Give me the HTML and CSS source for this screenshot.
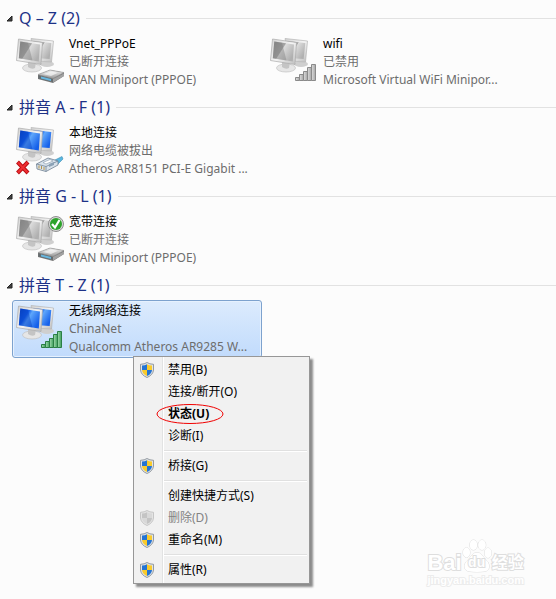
FILE: index.html
```html
<!DOCTYPE html>
<html lang="zh-CN">
<head>
<meta charset="utf-8">
<title>网络连接</title>
<link rel="stylesheet" href="styles.css">
</head>
<body>
<svg class="defs" width="0" height="0" aria-hidden="true">
  <defs>
    <linearGradient id="blue" x1="0" y1="0" x2="1" y2="0.6">
      <stop offset="0" stop-color="#0b45c4"/><stop offset="0.4" stop-color="#1560ea"/>
      <stop offset="0.55" stop-color="#5ea6fb"/><stop offset="1" stop-color="#1560ea"/>
    </linearGradient>
    <linearGradient id="grey" x1="0" y1="0" x2="1" y2="0.6">
      <stop offset="0" stop-color="#8a8a8a"/><stop offset="0.48" stop-color="#a4a4a4"/>
      <stop offset="0.52" stop-color="#dcdcdc"/><stop offset="1" stop-color="#b0b0b0"/>
    </linearGradient>
    <linearGradient id="frame" x1="0" y1="0" x2="1" y2="1">
      <stop offset="0" stop-color="#d2d2d2"/><stop offset="0.5" stop-color="#f4f4f4"/><stop offset="1" stop-color="#bcbcbc"/>
    </linearGradient>
    <linearGradient id="greenbar" x1="0" y1="0" x2="1" y2="0">
      <stop offset="0" stop-color="#a2dcae"/><stop offset="1" stop-color="#3d9d5a"/>
    </linearGradient>
    <linearGradient id="greybar" x1="0" y1="0" x2="1" y2="0">
      <stop offset="0" stop-color="#dedede"/><stop offset="1" stop-color="#a5a5a5"/>
    </linearGradient>
    <linearGradient id="metal" x1="0" y1="0" x2="0" y2="1">
      <stop offset="0" stop-color="#f0f0f0"/><stop offset="1" stop-color="#9a9a9a"/>
    </linearGradient>
    <symbol id="monitors" viewBox="0 0 50 50">
      <ellipse cx="32" cy="28" rx="7" ry="3" fill="#cfcfcf"/>
      <path d="M16 2.5 38.500 5 36.500 26 20 25Z" fill="url(#frame)" stroke="#b4b4b4" stroke-width=".7"/>
      <path d="M18 5 36.300 7 34.700 23 20 22Z" fill="var(--screen)"/>
      <ellipse cx="17" cy="32" rx="9.500" ry="4" fill="#e6e6e6" stroke="#c2c2c2" stroke-width=".7"/>
      <path d="M13 25 21 26 20 32Q17 34 13 31Z" fill="#c4c4c4"/>
      <path d="M3.500 3 27.500 6.500 26 28.500 1.500 24.500Z" fill="url(#frame)" stroke="#ababab" stroke-width=".7"/>
      <path d="M5.300 5.500 25 8.500 23.800 25.500 3.800 22.300Z" fill="var(--screen)"/>
      <path d="M5.300 5.500 13 6.700 17.500 24.500 3.800 22.300Z" fill="var(--shade)" opacity=".4"/>
    </symbol>
    <symbol id="modem" viewBox="0 0 50 50">
      <path d="M23 39 35 34 49 36.500V40L38 47 23 43Z" fill="#777"/>
      <path d="M23 38.500 35 34 49 36.500 38 42.500Z" fill="url(#metal)" stroke="#929292" stroke-width=".6"/>
      <path d="M28 38 36 35.500 43 36.800 36 40Z" fill="#fff" opacity=".6"/>
      <path d="M23.500 39.500 38 43V46L23.500 42.500Z" fill="#646c70"/>
      <path d="M26 40.500 36 43V45L26 42.500Z" fill="#68b7df"/>
      <path d="M38 43 49 37.500V40L38 46.500Z" fill="#a2a2a2"/>
    </symbol>
    <symbol id="bars" viewBox="0 0 50 50">
      <g fill="var(--bar)" stroke="var(--bar-edge)">
        <path d="M26.500 41.500H30.500V44.500H26.500Z"/><path d="M30.500 38.500H34.500V44.500H30.500Z"/>
        <path d="M34.500 35.500H38.500V44.500H34.500Z"/><path d="M38.500 31.500H42.500V44.500H38.500Z"/>
        <path d="M42.500 28.500H46.500V44.500H42.500Z"/>
      </g>
    </symbol>
    <symbol id="plug" viewBox="0 0 50 50">
      <path d="M38 36 47 31.500 48 34 43 39Z" fill="#58b8e2" stroke="#438caf" stroke-width=".6"/>
      <path d="M21.500 39 33 33 43 36V40L31 46.500 22 44Z" fill="#d8e2eb" stroke="#6e7f90" stroke-width=".8"/>
      <path d="M21.500 39 31 41.500 43 36M31 41.500V46.500" fill="none" stroke="#718395" stroke-width=".8"/>
      <path d="M24 40.500V43.500M26.500 41V44M29 42V45" stroke="#b59349" stroke-width="1"/>
      <path d="M28 37.500 35 34.500 38 36 31 39Z" fill="#fff" stroke="#8497a9" stroke-width=".6"/>
      <path d="M34 42V39L39 37V40" fill="#8ca2b6"/>
    </symbol>
    <symbol id="cross" viewBox="0 0 50 50">
      <path d="M2.500 37 13 48M13 37 2.500 48" stroke="#b90d13" stroke-width="4"/>
      <path d="M3 37.500 12.500 47.500M12.500 37.500 3 47.500" stroke="#ee2e32" stroke-width="2.200"/>
    </symbol>
    <symbol id="tick" viewBox="0 0 50 50">
      <circle cx="41" cy="10" r="7.500" fill="#d9d9d9" stroke="#858585" stroke-width=".9"/>
      <circle cx="41" cy="10" r="6" fill="#2da32b"/>
      <path d="M37 10 40 13.500 44.500 6" fill="none" stroke="#fff" stroke-width="2.200"/>
    </symbol>
    <symbol id="shield" viewBox="0 0 14 16">
      <path d="M7 .5Q9.500 2.200 13.500 2.300V8Q13 13 7 15.500 1 13 .5 8V2.300Q4.500 2.200 7 .5Z" fill="var(--rim)" stroke="var(--rim-edge)" stroke-width=".8"/>
      <path d="M7 2.300V8H2V3.600Q5 3.500 7 2.300ZM7 8H12Q11.600 12 7 14Z" fill="var(--a)"/>
      <path d="M7 2.300Q9 3.500 12 3.600V8H7ZM2 8H7V14Q2.400 12 2 8Z" fill="var(--b)"/>
    </symbol>
  </defs>
</svg>

<main class="connections">
  <section class="group">
    <h2 class="group-title"><svg class="arrow" viewBox="0 0 7 7" aria-hidden="true"><path d="M6 1V6H1Z"/></svg>Q – Z (2)</h2>
    <ul class="items">
      <li class="item off">
        <svg class="icon" aria-hidden="true"><use href="#monitors"/><use href="#modem"/></svg>
        <div class="text"><p class="name">Vnet_PPPoE</p><p>已断开连接</p><p>WAN Miniport (PPPOE)</p></div>
      </li>
      <li class="item off">
        <svg class="icon" aria-hidden="true"><use href="#monitors"/><use href="#bars"/></svg>
        <div class="text"><p class="name">wifi</p><p>已禁用</p><p>Microsoft Virtual WiFi Minipor...</p></div>
      </li>
    </ul>
  </section>
  <section class="group">
    <h2 class="group-title"><svg class="arrow" viewBox="0 0 7 7" aria-hidden="true"><path d="M6 1V6H1Z"/></svg>拼音 A - F (1)</h2>
    <ul class="items">
      <li class="item">
        <svg class="icon" aria-hidden="true"><use href="#monitors"/><use href="#plug"/><use href="#cross"/></svg>
        <div class="text"><p class="name">本地连接</p><p>网络电缆被拔出</p><p>Atheros AR8151 PCI-E Gigabit ...</p></div>
      </li>
    </ul>
  </section>
  <section class="group">
    <h2 class="group-title"><svg class="arrow" viewBox="0 0 7 7" aria-hidden="true"><path d="M6 1V6H1Z"/></svg>拼音 G - L (1)</h2>
    <ul class="items">
      <li class="item off">
        <svg class="icon" aria-hidden="true"><use href="#monitors"/><use href="#modem"/><use href="#tick"/></svg>
        <div class="text"><p class="name">宽带连接</p><p>已断开连接</p><p>WAN Miniport (PPPOE)</p></div>
      </li>
    </ul>
  </section>
  <section class="group">
    <h2 class="group-title"><svg class="arrow" viewBox="0 0 7 7" aria-hidden="true"><path d="M6 1V6H1Z"/></svg>拼音 T - Z (1)</h2>
    <ul class="items">
      <li class="item selected">
        <svg class="icon" aria-hidden="true"><use href="#monitors"/><use href="#bars"/></svg>
        <div class="text"><p class="name">无线网络连接</p><p>ChinaNet</p><p>Qualcomm Atheros AR9285 W...</p></div>
        <div class="menu" role="menu">
          <button class="command" role="menuitem"><svg class="shield" aria-hidden="true"><use href="#shield"/></svg><span>禁用(B)</span></button>
          <button class="command" role="menuitem"><span>连接/断开(O)</span></button>
          <button class="command default" role="menuitem"><span>状态(U)</span><svg class="ring" viewBox="0 0 68 20" aria-hidden="true"><ellipse cx="34" cy="10" rx="33" ry="9.500"/></svg></button>
          <button class="command" role="menuitem"><span>诊断(I)</span></button>
          <hr class="separator">
          <button class="command" role="menuitem"><svg class="shield" aria-hidden="true"><use href="#shield"/></svg><span>桥接(G)</span></button>
          <hr class="separator">
          <button class="command" role="menuitem"><span>创建快捷方式(S)</span></button>
          <button class="command" role="menuitem" disabled><svg class="shield" aria-hidden="true"><use href="#shield"/></svg><span>删除(D)</span></button>
          <button class="command" role="menuitem"><svg class="shield" aria-hidden="true"><use href="#shield"/></svg><span>重命名(M)</span></button>
          <hr class="separator">
          <button class="command" role="menuitem"><svg class="shield" aria-hidden="true"><use href="#shield"/></svg><span>属性(R)</span></button>
        </div>
      </li>
    </ul>
  </section>
</main>

<div class="watermark">
  <div class="brand">
    <span class="bai">Bai</span>
    <span class="paw">
      <svg viewBox="0 0 30 34" aria-hidden="true"><ellipse cx="4.500" cy="13.500" rx="3.500" ry="5"/><ellipse cx="11.500" cy="6" rx="3.800" ry="5"/><ellipse cx="20" cy="6" rx="3.800" ry="5"/><ellipse cx="26" cy="14" rx="3.500" ry="5"/><path d="M15 13.500C19 13.500 21 18 24 21 28 24 29 32 22 32.500 18 33 12 33 8 32.500 1 32 1 25 6 21 9 18 11 13.500 15 13.500Z"/></svg>
      <span class="du">du</span>
    </span>
    <span class="jingyan">经验</span>
  </div>
  <div class="site">jingyan.baidu.com</div>
</div>
</body>
</html>
```
FILE: styles.css
```css
* {
  box-sizing: border-box;
}

body {
  position: relative;
  min-height: 100vh;
  margin: 0;
  background: #fcfcfc;
  color: #6d6d6d;
  font: 12px/18px "Noto Sans", "Noto Sans CJK SC", sans-serif;
}

.defs {
  position: absolute;
}

.connections {
  min-height: 100vh;
  padding-top: 8px;
}

.group {
  margin-bottom: 6px;
}

.group-title {
  display: flex;
  align-items: center;
  margin: 0 0 5px;
  padding-left: 6px;
  color: #1e3287;
  font-size: 16px;
  font-weight: 400;
  line-height: 20px;
}

.group-title::after {
  content: "";
  flex: 1;
  height: 1px;
  margin-left: 6px;
  background: #e2e2e2;
}

.arrow {
  width: 7px;
  height: 7px;
  margin-right: 6px;
  fill: #444;
  stroke: #222;
  stroke-width: 1;
}

.items {
  display: grid;
  grid-template-columns: repeat(auto-fill, 250px);
  gap: 4px;
  margin: 0;
  padding: 0 0 0 12px;
  list-style: none;
}

.item {
  --screen: url(#blue);
  --shade: #0038b8;
  --bar: url(#greenbar);
  --bar-edge: #2b7f45;
  position: relative;
  display: flex;
  gap: 4px;
  height: 58px;
  padding: 1px 2px;
  border: 1px solid transparent;
  border-radius: 3px;
}

.off {
  --screen: url(#grey);
  --shade: #777;
  --bar: url(#greybar);
  --bar-edge: #8a8a8a;
}

.selected {
  border-color: #7da2ce;
  background: linear-gradient(#dcebfd, #c1dbfc);
  box-shadow: inset 0 0 0 1px #e6f1fe;
}

.icon {
  flex: none;
  width: 50px;
  height: 50px;
  margin-top: 1px;
}

.text {
  white-space: nowrap;
}

.text p {
  margin: 0;
}

.text .name {
  color: #000;
}

.menu {
  position: absolute;
  z-index: 1;
  top: 55px;
  left: 120px;
  width: 177px;
  padding: 2px;
  border: 1px solid #979797;
  background: linear-gradient(90deg, #f1f1f1 28px, #e2e3e3 28px, #e2e3e3 29px, #fff 29px, #fff 30px, #f1f1f1 30px);
  box-shadow: 3px 3px 2px #8c8c8c;
}

.command {
  position: relative;
  display: flex;
  align-items: center;
  width: 100%;
  height: 22px;
  padding: 0 0 0 32px;
  border: 0;
  background: none;
  color: #000;
  font: inherit;
  text-align: left;
}

.command:disabled {
  color: #838383;
}

.default {
  font-weight: 700;
}

.shield {
  --rim: #dfe3e8;
  --rim-edge: #7d858d;
  --a: #2474d3;
  --b: #f9cb2c;
  width: 14px;
  height: 16px;
  margin: 0 14px 0 -28px;
}

.command:disabled .shield {
  --rim: #e4e4e4;
  --rim-edge: #bcbcbc;
  --a: #c4c4c4;
  --b: #d8d8d8;
}

.ring {
  position: absolute;
  top: 1px;
  left: 20px;
  width: 68px;
  height: 20px;
  fill: none;
  stroke: #f00000;
}

.separator {
  height: 2px;
  margin: 3px 0 3px 28px;
  border: 0;
  border-top: 1px solid #e0e0e0;
  border-bottom: 1px solid #fff;
}

.watermark {
  position: absolute;
  right: 32px;
  bottom: 12px;
  color: #fff;
  font-family: "Liberation Sans", "Noto Sans CJK SC", sans-serif;
  font-weight: 700;
  -webkit-text-stroke: 2px #dedede;
  paint-order: stroke fill;
}

.brand {
  display: flex;
  align-items: flex-end;
  height: 34px;
}

.bai {
  font-size: 22px;
  line-height: 20px;
}

.paw {
  position: relative;
  width: 30px;
  height: 34px;
}

.paw svg {
  width: 30px;
  height: 34px;
  fill: #fff;
  stroke: #dedede;
}

.du {
  position: absolute;
  inset: 14px 0 0;
  font-size: 14px;
  line-height: 18px;
  text-align: center;
}

.jingyan {
  font-size: 16px;
  line-height: 20px;
}

.site {
  font-size: 11px;
  line-height: 14px;
  -webkit-text-stroke: 2px #ececec;
}
```
